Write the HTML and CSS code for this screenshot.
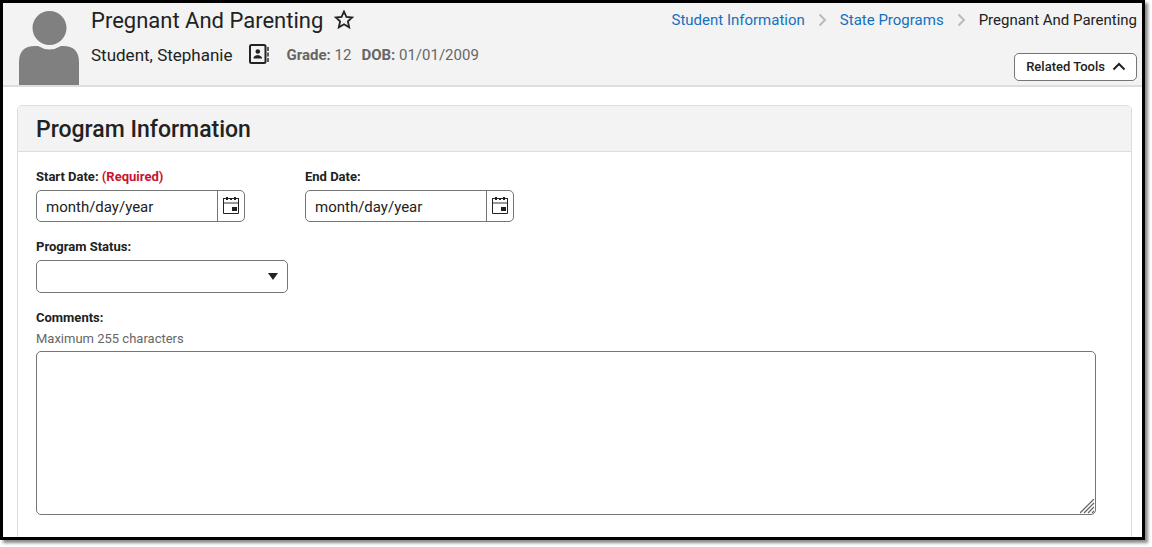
FILE: index.html
```html
<!DOCTYPE html>
<html lang="en">
<head>
  <meta charset="UTF-8">
  <meta name="viewport" content="width=device-width, initial-scale=1.0">
  <title>Pregnant And Parenting</title>
  <link rel="stylesheet" href="styles.css">
</head>
<body>
  <div class="frame">
    <header class="header">
      <svg class="avatar" viewBox="0 0 60 74" aria-hidden="true">
        <circle cx="30.500" cy="17" r="17"/>
        <path d="M0 74V51Q0 35 16 35H19Q30.500 42 42 35H44Q60 35 60 51V74Z"/>
      </svg>
      <div class="student">
        <div class="title-row">
          <h1>Pregnant And Parenting</h1>
          <button type="button" class="icon-button" aria-label="Add to favorites">
            <svg width="20" height="20" viewBox="0 0 20 20"><path d="M10 1.500L12.400 6.900L18.200 7.500L13.900 11.400L15.200 17.300L10 14.200L4.800 17.300L6.100 11.400L1.800 7.500L7.600 6.900Z" fill="none" stroke="#222" stroke-width="1.800"/></svg>
          </button>
        </div>
        <div class="student-row">
          <span class="student-name">Student, Stephanie</span>
          <svg class="card-icon" width="20" height="22" viewBox="0 0 20 22" aria-hidden="true">
            <rect x="1" y="1" width="15.500" height="18" rx="1.500" fill="none" stroke="#222" stroke-width="2"/>
            <path d="M19 3V18" stroke="#222" stroke-width="1.400" stroke-dasharray="4 1.500"/>
            <circle cx="8.800" cy="7.500" r="2.300" fill="#222"/>
            <path d="M4.500 14.500V13.500Q6 11 8.800 11Q11.500 11 13 13.500V14.500Z" fill="#222"/>
          </svg>
          <span class="detail"><b>Grade:</b> 12</span>
          <span class="detail"><b>DOB:</b> 01/01/2009</span>
        </div>
      </div>
      <div class="header-right">
        <nav class="breadcrumb" aria-label="Breadcrumb">
          <a href="#">Student Information</a>
          <svg width="9" height="14" viewBox="0 0 9 14" aria-hidden="true"><path d="M1.500 1.500L7 7L1.500 12.500" fill="none" stroke="#bbb" stroke-width="2"/></svg>
          <a href="#">State Programs</a>
          <svg width="9" height="14" viewBox="0 0 9 14" aria-hidden="true"><path d="M1.500 1.500L7 7L1.500 12.500" fill="none" stroke="#bbb" stroke-width="2"/></svg>
          <span>Pregnant And Parenting</span>
        </nav>
        <button type="button" class="related-tools">
          Related Tools
          <svg width="14" height="9" viewBox="0 0 14 9" aria-hidden="true"><path d="M1.500 7.500L7 2L12.500 7.500" fill="none" stroke="#222" stroke-width="2"/></svg>
        </button>
      </div>
    </header>
    <main>
      <section class="panel">
        <h2>Program Information</h2>
        <form class="panel-body">
          <div class="date-row">
            <div class="field">
              <label for="start-date">Start Date: <span class="required">(Required)</span></label>
              <div class="date-input">
                <input type="text" id="start-date" placeholder="month/day/year" required>
                <button type="button" aria-label="Choose start date">
                  <svg width="16" height="17" viewBox="0 0 16 17"><path d="M.5 1.500H15.500V16.500H.5Z" fill="none" stroke="#222"/><path d="M1 5H15V7H1Z" fill="#999"/><path d="M0 1H16V2H0ZM3 0H5V3H3ZM7 1H9V3H7ZM11 0H13V3H11ZM9 10H14V14H9Z" fill="#222"/></svg>
                </button>
              </div>
            </div>
            <div class="field">
              <label for="end-date">End Date:</label>
              <div class="date-input">
                <input type="text" id="end-date" placeholder="month/day/year">
                <button type="button" aria-label="Choose end date">
                  <svg width="16" height="17" viewBox="0 0 16 17"><path d="M.5 1.500H15.500V16.500H.5Z" fill="none" stroke="#222"/><path d="M1 5H15V7H1Z" fill="#999"/><path d="M0 1H16V2H0ZM3 0H5V3H3ZM7 1H9V3H7ZM11 0H13V3H11ZM9 10H14V14H9Z" fill="#222"/></svg>
                </button>
              </div>
            </div>
          </div>
          <div class="field">
            <label for="program-status">Program Status:</label>
            <div class="select-wrap">
              <select id="program-status">
                <option value=""></option>
              </select>
              <svg class="select-arrow" width="10" height="7" viewBox="0 0 10 7" aria-hidden="true"><path d="M0 0H10L5 7Z" fill="#222"/></svg>
            </div>
          </div>
          <div class="field">
            <label for="comments">Comments:</label>
            <span class="hint" id="comments-hint">Maximum 255 characters</span>
            <div class="textarea-wrap">
              <textarea id="comments" maxlength="255" aria-describedby="comments-hint"></textarea>
              <svg class="grip" width="15" height="15" viewBox="0 0 15 15" aria-hidden="true"><path d="M0 14L14 0M4 14L14 4M8 14L14 8M12 14L14 12" fill="none" stroke="#666" stroke-width="1.300"/></svg>
            </div>
          </div>
        </form>
      </section>
    </main>
  </div>
</body>
</html>
```
FILE: styles.css
```css
* {
  box-sizing: border-box;
}
body {
  margin: 0;
  padding: 0 7px 7px 0;
  height: 100vh;
  background: #fff;
  color: #222;
  font-family: Roboto, sans-serif;
  font-size: 15px;
}
.frame {
  height: 100%;
  border: 3px solid #000;
  overflow: hidden;
  box-shadow: 3px 3px 3px #888;
}
button, input, select, textarea {
  font: inherit;
  color: inherit;
}
button {
  cursor: pointer;
}
svg {
  display: block;
  flex: none;
}
.header {
  display: flex;
  padding: 0 5px 0 16px;
  background: #f3f3f3;
  border-bottom: 2px solid #ddd;
}
.avatar {
  width: 60px;
  height: 74px;
  margin: 8px 12px 0 0;
  fill: #808080;
}
.title-row {
  display: flex;
  align-items: center;
  gap: 11px;
  height: 34px;
}
h1 {
  margin: 0;
  font-size: 22px;
  font-weight: 400;
}
.icon-button {
  padding: 0;
  border: 0;
  background: none;
}
.student-row {
  display: flex;
  align-items: center;
  height: 36px;
}
.student-name {
  font-size: 17px;
}
.card-icon {
  margin: 0 18px 0 16px;
}
.detail {
  margin-right: 10px;
  font-size: 15px;
  color: #666;
}
.header-right {
  display: flex;
  flex-direction: column;
  align-items: flex-end;
  justify-content: space-between;
  margin-left: auto;
  padding: 8px 0 4px;
}
.breadcrumb {
  display: flex;
  align-items: center;
  gap: 13px;
}
.breadcrumb a {
  color: #1570bd;
  text-decoration: none;
}
.related-tools {
  display: flex;
  align-items: center;
  gap: 7px;
  height: 28px;
  padding: 0 10px 2px 11px;
  border: 1px solid #757575;
  border-radius: 5px;
  background: #fff;
  font-size: 13px;
  font-weight: 500;
}
main {
  padding: 18px 10px 0 14px;
}
.panel {
  border: 1px solid #ddd;
  border-radius: 5px;
  overflow: hidden;
}
h2 {
  margin: 0;
  padding: 2px 18px 0;
  background: #f3f3f3;
  border-bottom: 1px solid #ddd;
  font-size: 23px;
  font-weight: 500;
  line-height: 43px;
}
.panel-body {
  display: flex;
  flex-direction: column;
  gap: 16px;
  padding: 16px 35px 60px 18px;
}
.date-row {
  display: flex;
  gap: 60px;
}
.field label {
  display: block;
  margin-bottom: 4px;
  font-size: 13px;
  font-weight: 700;
  line-height: 18px;
}
.required {
  color: #c8142f;
}
.date-input {
  display: flex;
  width: 209px;
  height: 32px;
  border: 1px solid #757575;
  border-radius: 5px;
}
.date-input input {
  flex: 1;
  min-width: 0;
  padding: 1px 9px 0;
  border: 0;
  background: none;
}
.date-input input::placeholder {
  color: #222;
}
.date-input button {
  display: flex;
  align-items: center;
  justify-content: center;
  width: 27px;
  padding: 0 0 2px;
  border: 0;
  border-left: 1px solid #757575;
  background: none;
}
.select-wrap {
  position: relative;
  width: 252px;
}
.select-wrap select {
  display: block;
  width: 100%;
  height: 33px;
  border: 1px solid #757575;
  border-radius: 5px;
  background: #fff;
  appearance: none;
}
.select-arrow {
  position: absolute;
  top: 13px;
  right: 10px;
  pointer-events: none;
}
.hint {
  display: block;
  margin-bottom: 4px;
  font-size: 13px;
  line-height: 16px;
  color: #666;
}
.textarea-wrap {
  position: relative;
}
.textarea-wrap textarea {
  display: block;
  width: 100%;
  height: 164px;
  border: 1px solid #757575;
  border-radius: 5px;
  resize: none;
}
.grip {
  position: absolute;
  right: 1px;
  bottom: 1px;
}
```
